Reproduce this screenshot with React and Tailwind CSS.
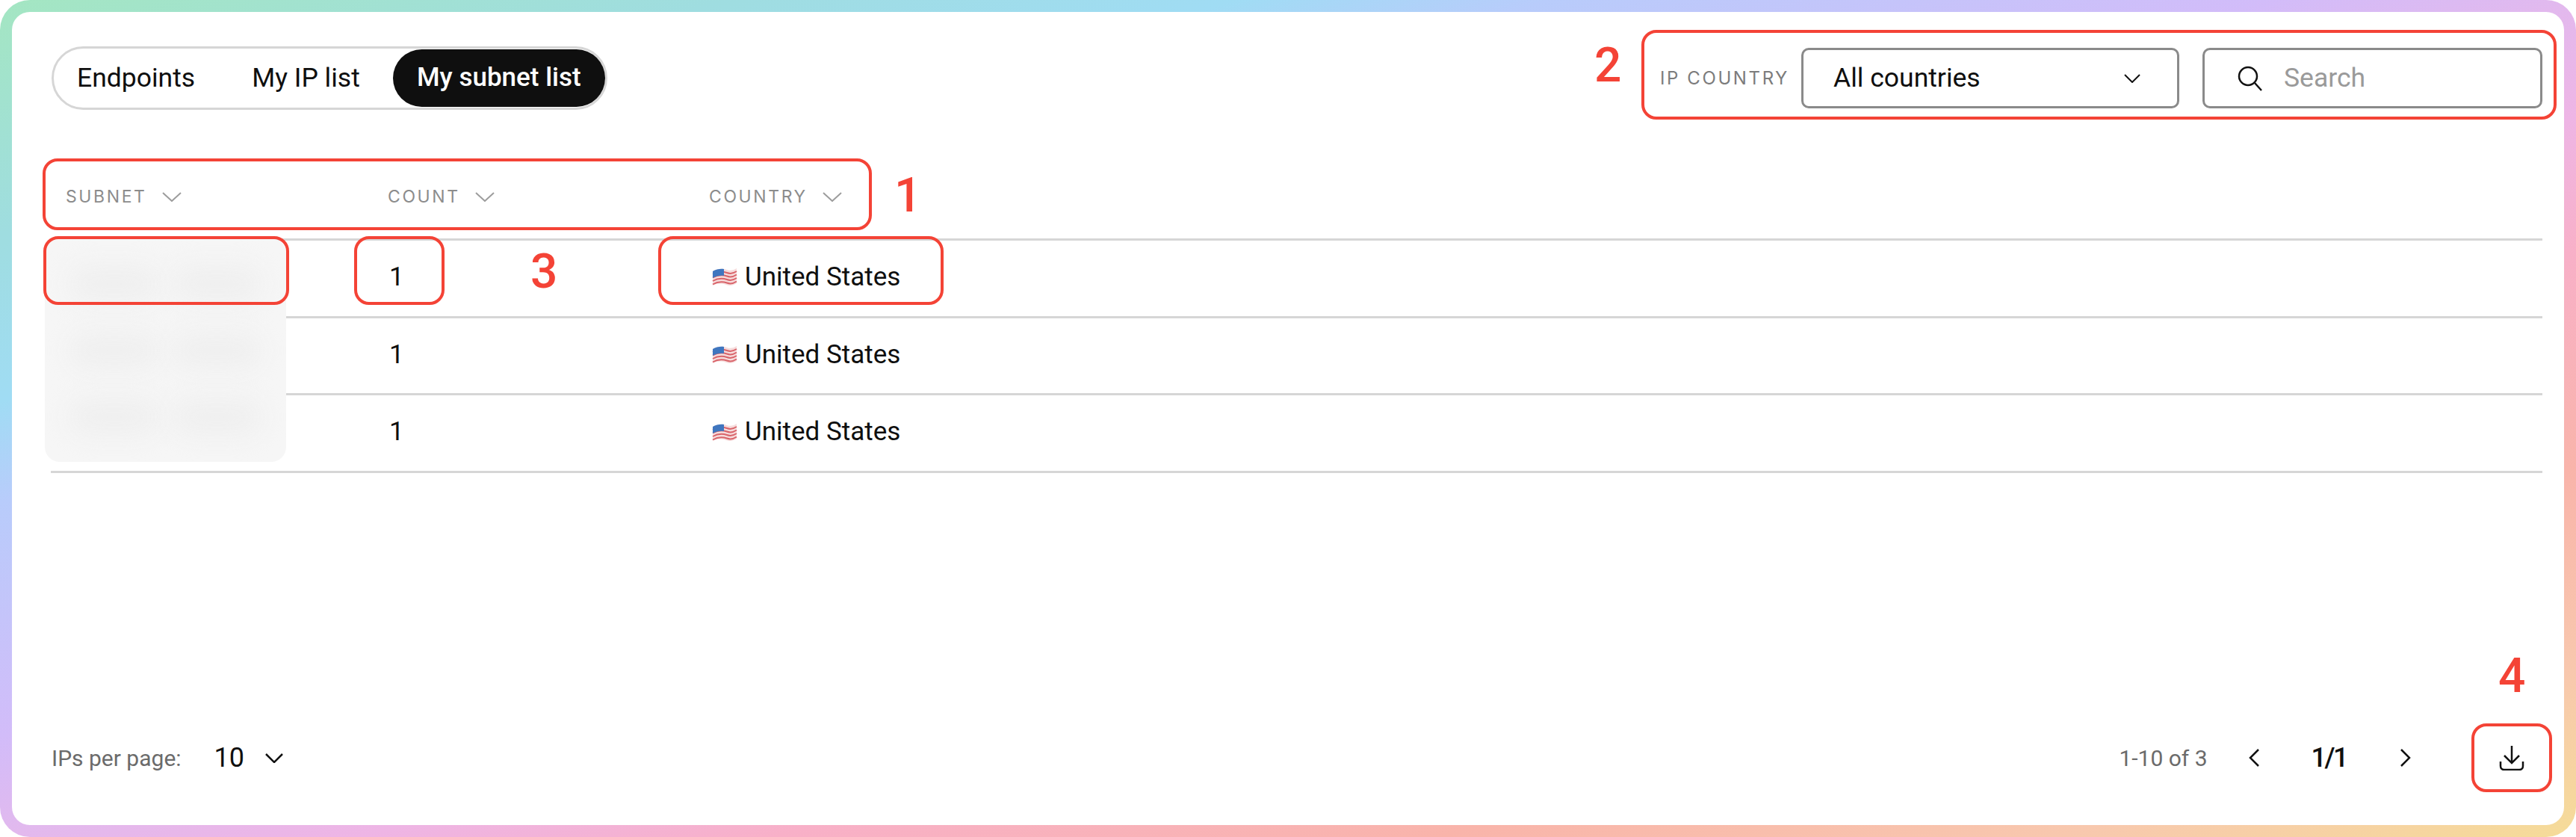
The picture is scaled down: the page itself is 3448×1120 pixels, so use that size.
import React from 'react';

const rows = [0, 1, 2];

const Chevron = ({ className, width = 22, height = 12, strokeWidth = 2 }) => (
  <svg width={width} height={height} viewBox={`0 0 ${width} ${height}`} fill="none" stroke="currentColor" strokeWidth={strokeWidth} className={className}>
    <path d={`M1 1 L${width / 2} ${height - 1} L${width - 1} 1`} />
  </svg>
);

const HeaderCell = ({ label }) => (
  <div className="flex items-center gap-[20px] font-['Inter',sans-serif] text-[#8c8c8c] text-[23px] tracking-[2.6px]">
    <span>{label}</span>
    <Chevron className="text-[#9c9c9c]" width={26} height={13} />
  </div>
);

const Flag = () => (
  <svg width="34" height="26" viewBox="0 0 34 26" className="shrink-0">
    <path d="M1 5 C8 1 14 1 20 3 C25 5 30 3 33 1 L33 21 C28 24 24 25 19 23 C13 21 7 21 1 24 Z" fill="#f6dcdc" />
    <path d="M1 9 C8 5 14 5 20 7 C25 9 30 7 33 5" fill="none" stroke="#d9646a" strokeWidth="2" />
    <path d="M1 13.500 C8 9.500 14 9.500 20 11.500 C25 13.500 30 11.500 33 9.500" fill="none" stroke="#d9646a" strokeWidth="2" />
    <path d="M1 18 C8 14 14 14 20 16 C25 18 30 16 33 14" fill="none" stroke="#d9646a" strokeWidth="2" />
    <path d="M1 22.500 C8 18.500 14 18.500 20 20.500 C25 22.500 30 20.500 33 18.500" fill="none" stroke="#d9646a" strokeWidth="2" />
    <path d="M1 5 C6 2 11 1.500 16 2 L16 11 C11 10.500 6 11 1 14 Z" fill="#3f76bf" />
  </svg>
);

const Callout = ({ className }) => (
  <div className={`absolute border-[4px] border-[#f44336] rounded-[20px] pointer-events-none ${className}`} />
);

const CalloutNumber = ({ className, children }) => (
  <span className={`absolute text-[64px] font-medium leading-none text-[#f44336] ${className}`}>{children}</span>
);

export default function App() {
  return (
    <div className="relative h-[1120px] w-full p-4 rounded-[40px] bg-[linear-gradient(to_bottom_right,#a4e6c2,#9fdde0_14%,#a0dcf4_24%,#b8ccfb_30%,#d2bcf9_44%,#e2b9ee_50%,#eeb5e5_57%,#f8b0c8_65%,#f9b4aa_78%,#f8c8ae_90%,#f5dc98)] font-['Roboto',sans-serif] text-[#0f0f0f]">
      <div className="flex h-full flex-col rounded-[24px] bg-white">
        <div className="flex items-center justify-between pl-[53px] pr-[29px] pt-[46px]">
          <div className="flex h-[85px] items-center rounded-full border-[3px] border-[#d6d6d6] pl-[31px] text-[35.500px]">
            <span>Endpoints</span>
            <span className="ml-[76px]">My IP list</span>
            <span className="ml-[44px] flex h-[77px] w-[284px] items-center justify-center rounded-full bg-[#0f0f0f] font-medium text-[35px] text-white">My subnet list</span>
          </div>
          <div className="flex items-center">
            <span className="font-['Inter',sans-serif] text-[24px] tracking-[2.6px] text-[#7c7c7c]">IP COUNTRY</span>
            <div className="ml-[16px] flex h-[81px] w-[506px] items-center justify-between rounded-[10px] border-[3px] border-[#8a8a8a] pl-[40px] pr-[49px] text-[35.500px]">
              <span>All countries</span>
              <Chevron className="text-[#111]" />
            </div>
            <div className="ml-[31px] flex h-[81px] w-[455px] items-center rounded-[10px] border-[3px] border-[#8a8a8a] pl-[43px] text-[35.500px] text-[#9a9a9a]">
              <svg width="36" height="36" viewBox="0 0 36 36" fill="none" stroke="#111" strokeWidth="2.500">
                <circle cx="15" cy="15" r="12" />
                <path d="M24 24 L33 34" />
              </svg>
              <span className="ml-[27px]">Search</span>
            </div>
          </div>
        </div>

        <div className="mt-[58px] pl-[52px] pr-[29px]">
          <div className="grid h-[114px] grid-cols-[431px_430px_1fr] items-center pl-[20px] pt-[2px]">
            <HeaderCell label="SUBNET" />
            <HeaderCell label="COUNT" />
            <HeaderCell label="COUNTRY" />
          </div>
          <div className="relative border-t-[3px] border-[#d6d6d6]">
            {rows.map((row) => (
              <div key={row} className="grid h-[103.67px] grid-cols-[431px_430px_1fr] items-center border-b-[3px] border-[#d6d6d6] pb-[2px] pl-[20px] text-[35px]">
                <span />
                <span className="pl-[2px]">1</span>
                <div className="flex items-center gap-[10px] pl-[4px]">
                  <Flag />
                  <span>United States</span>
                </div>
              </div>
            ))}
            <div className="absolute -left-[8px] -top-[3px] flex h-[299px] w-[323px] flex-col justify-around overflow-hidden rounded-[20px] bg-[#f6f6f6] px-[34px] py-[16px]">
              {rows.map((row) => (
                <div key={row} className="flex h-[48px] gap-[20px]">
                  <div className="h-full flex-1 rounded-full bg-[#efefef] blur-lg" />
                  <div className="h-full flex-1 rounded-full bg-[#efefef] blur-lg" />
                </div>
              ))}
            </div>
          </div>
        </div>

        <div className="mt-auto flex h-[92px] items-center justify-between pl-[53px] pr-[16px] mb-[44px]">
          <div className="flex items-center">
            <span className="text-[30px] text-[#6b6b6b]">IPs per page:</span>
            <span className="ml-[44px] text-[36px]">10</span>
            <Chevron className="ml-[28px] text-[#111]" width={24} height={13} strokeWidth={2.5} />
          </div>
          <div className="flex items-center">
            <span className="text-[30px] text-[#6b6b6b]">1-10 of 3</span>
            <svg width="14" height="24" viewBox="0 0 14 24" fill="none" stroke="#111" strokeWidth="2.500" className="ml-[55px]">
              <path d="M13 1 L2 12 L13 23" />
            </svg>
            <span className="ml-[70px] text-[36px] font-medium tracking-[-2.500px]">1/1</span>
            <svg width="14" height="24" viewBox="0 0 14 24" fill="none" stroke="#111" strokeWidth="2.500" className="ml-[72px]">
              <path d="M1 1 L12 12 L1 23" />
            </svg>
            <div className="ml-[81px] flex h-[92px] w-[108px] items-center justify-center">
              <svg width="34" height="34" viewBox="0 0 34 34" fill="none" stroke="#111" strokeWidth="2.500">
                <path d="M17 1 V23 M7 14 L17 24 L27 14" />
                <path d="M2 22 V28 C2 31 4 33 7 33 H27 C30 33 32 31 32 28 V22" />
              </svg>
            </div>
          </div>
        </div>
      </div>

      <Callout className="left-[57px] top-[212px] h-[96px] w-[1110px]" />
      <Callout className="left-[2197px] top-[40px] h-[120px] w-[1225px]" />
      <Callout className="left-[58px] top-[316px] h-[92px] w-[329px]" />
      <Callout className="left-[474px] top-[316px] h-[92px] w-[121px]" />
      <Callout className="left-[881px] top-[316px] h-[92px] w-[382px]" />
      <Callout className="left-[3308px] top-[968px] h-[92px] w-[108px]" />
      <CalloutNumber className="left-[1197px] top-[230px]">1</CalloutNumber>
      <CalloutNumber className="left-[2134px] top-[56px]">2</CalloutNumber>
      <CalloutNumber className="left-[710px] top-[332px]">3</CalloutNumber>
      <CalloutNumber className="left-[3344px] top-[873px]">4</CalloutNumber>
    </div>
  );
}
